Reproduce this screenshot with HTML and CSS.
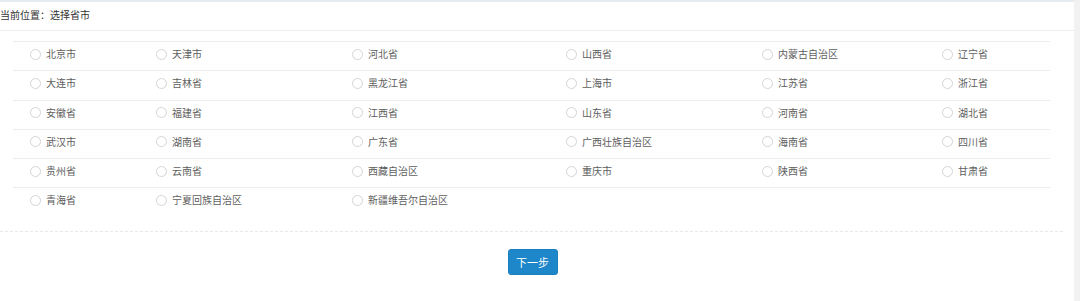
FILE: index.html
```html
<!DOCTYPE html>
<html lang="zh-CN">
<head>
<meta charset="utf-8">
<title>选择省市</title>
<link rel="stylesheet" href="styles.css">
</head>
<body>
<div class="panel">
  <div class="crumb">当前位置：选择省市</div>
  <div class="body">
    <table class="regions">
      <colgroup>
        <col class="c1"><col class="c2"><col class="c3"><col class="c4"><col class="c5"><col class="c6">
      </colgroup>
      <tr>
        <td><label><span class="radio"></span>北京市</label></td>
        <td><label><span class="radio"></span>天津市</label></td>
        <td><label><span class="radio"></span>河北省</label></td>
        <td><label><span class="radio"></span>山西省</label></td>
        <td><label><span class="radio"></span>内蒙古自治区</label></td>
        <td><label><span class="radio"></span>辽宁省</label></td>
      </tr>
      <tr>
        <td><label><span class="radio"></span>大连市</label></td>
        <td><label><span class="radio"></span>吉林省</label></td>
        <td><label><span class="radio"></span>黑龙江省</label></td>
        <td><label><span class="radio"></span>上海市</label></td>
        <td><label><span class="radio"></span>江苏省</label></td>
        <td><label><span class="radio"></span>浙江省</label></td>
      </tr>
      <tr>
        <td><label><span class="radio"></span>安徽省</label></td>
        <td><label><span class="radio"></span>福建省</label></td>
        <td><label><span class="radio"></span>江西省</label></td>
        <td><label><span class="radio"></span>山东省</label></td>
        <td><label><span class="radio"></span>河南省</label></td>
        <td><label><span class="radio"></span>湖北省</label></td>
      </tr>
      <tr>
        <td><label><span class="radio"></span>武汉市</label></td>
        <td><label><span class="radio"></span>湖南省</label></td>
        <td><label><span class="radio"></span>广东省</label></td>
        <td><label><span class="radio"></span>广西壮族自治区</label></td>
        <td><label><span class="radio"></span>海南省</label></td>
        <td><label><span class="radio"></span>四川省</label></td>
      </tr>
      <tr>
        <td><label><span class="radio"></span>贵州省</label></td>
        <td><label><span class="radio"></span>云南省</label></td>
        <td><label><span class="radio"></span>西藏自治区</label></td>
        <td><label><span class="radio"></span>重庆市</label></td>
        <td><label><span class="radio"></span>陕西省</label></td>
        <td><label><span class="radio"></span>甘肃省</label></td>
      </tr>
      <tr class="last">
        <td><label><span class="radio"></span>青海省</label></td>
        <td><label><span class="radio"></span>宁夏回族自治区</label></td>
        <td><label><span class="radio"></span>新疆维吾尔自治区</label></td>
        <td></td>
        <td></td>
        <td></td>
      </tr>
    </table>
  </div>
  <div class="actions">
    <button class="btn" type="button">下一步</button>
  </div>
</div>
</body>
</html>
```
FILE: styles.css
```css
html, body {
  margin: 0;
  padding: 0;
  background: #f2f2f2;
}
body {
  font-family: "Noto Sans CJK SC", "Liberation Sans", sans-serif;
  font-size: 10px;
  color: #5e5e5e;
}
.panel {
  width: 1074px;
  height: 301px;
  background: #fff;
  border-top: 2px solid #e6ebf1;
  box-sizing: border-box;
}
.crumb {
  height: 28px;
  line-height: 26px;
  color: #333;
  border-bottom: 1px solid #eeeeee;
  padding-left: 0;
}
.body {
  padding: 10px 24px 0 13px;
}
.regions {
  border-collapse: collapse;
  table-layout: fixed;
  width: 1037px;
}
.c1 { width: 126px; }
.c2 { width: 196px; }
.c3 { width: 214px; }
.c4 { width: 196px; }
.c5 { width: 180px; }
.c6 { width: 125px; }
.regions tr {
  height: 29.3px;
  border-top: 1px solid #ececec;
}
.regions tr.last {
  height: 26px;
}
.regions td {
  padding: 5px 0 0 17px;
  vertical-align: top;
}
.regions label {
  display: flex;
  align-items: center;
  gap: 5px;
  line-height: 14px;
  white-space: nowrap;
}
.radio {
  width: 9px;
  height: 9px;
  border: 1px solid #d4d4d4;
  border-radius: 50%;
  background: #fff;
  flex: none;
}
.actions {
  margin-top: 17px;
  border-top: 1px dashed #e8e8e8;
  width: 1061px;
  padding-top: 17px;
  display: flex;
  justify-content: center;
  padding-left: 2px;
}
.btn {
  width: 50px;
  height: 26px;
  background: #1e87c9;
  border: 1px solid #1a7fbd;
  border-radius: 3px;
  color: #fff;
  font-family: "Noto Sans CJK SC", "Liberation Sans", sans-serif;
  font-size: 11px;
  padding: 0;
}
```
